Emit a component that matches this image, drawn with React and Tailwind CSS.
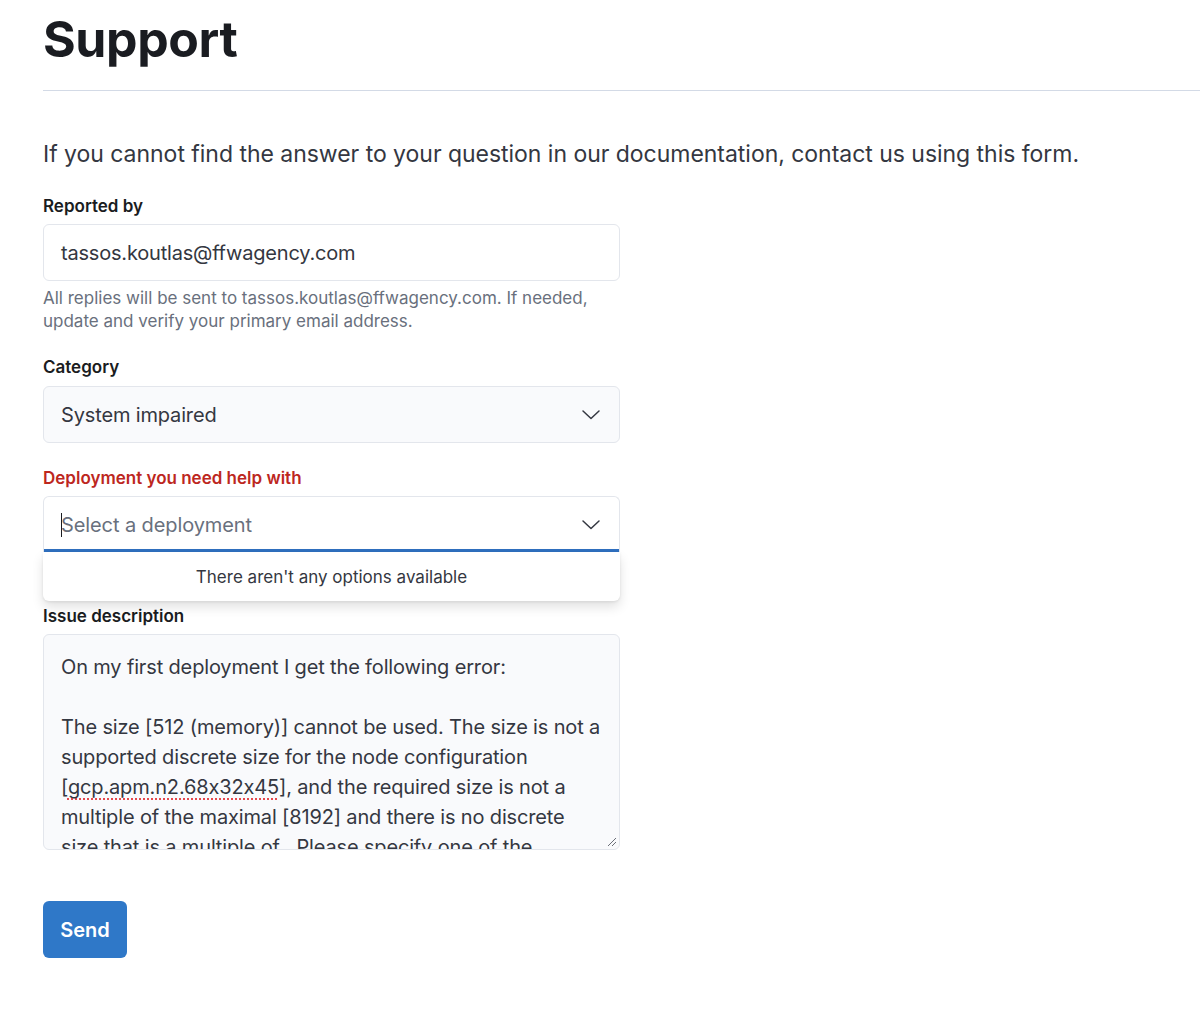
import React from "react";

function Chevron() {
  return (
    <svg width="20" height="20" viewBox="0 0 20 20" fill="none" stroke="#343741" strokeWidth="1.5" strokeLinecap="round" strokeLinejoin="round">
      <path d="M2 6 L10 13.5 L18 6" />
    </svg>
  );
}

export default function App() {
  return (
    <div className="min-h-[1012px] bg-white text-[#1a1c21] font-[Inter,'Noto_Sans',sans-serif] [font-feature-settings:'calt'_0]">
      <div className="pl-[43px] pt-[8px]">
        <h1 className="text-[50px] leading-[62px] font-bold tracking-[-0.4px] text-[#1a1c21]">Support</h1>
      </div>
      <div className="ml-[43px] mt-[20px] h-px bg-[#d3dae6]" />
      <div className="pl-[43px] pt-[48px]">
        <p className="text-[23px] leading-[30px] tracking-[-0.03px] text-[#343741]">
          If you cannot find the answer to your question in our documentation, contact us using this form.
        </p>

        <div className="w-[577px]">
          <div className="mt-[25px] text-[17px] leading-[24px] font-semibold text-[#1a1c21]">Reported by</div>
          <div className="mt-[6px] h-[57px] rounded-[6px] border border-[#e3e6ec] bg-white px-[17px] flex items-center text-[20px] tracking-[-0.2px] text-[#343741]">
            tassos.koutlas@ffwagency.com
          </div>
          <div className="mt-[6px] text-[17px] leading-[23px] text-[#69707d]">
            All replies will be sent to tassos.koutlas@ffwagency.com. If needed, update and verify your primary email address.
          </div>

          <div className="mt-[22px] text-[17px] leading-[24px] font-semibold text-[#1a1c21]">Category</div>
          <div className="mt-[7px] h-[57px] rounded-[6px] border border-[#e3e6ec] bg-[#f9fafc] pl-[17px] pr-[18px] flex items-center justify-between text-[20px] tracking-[-0.15px] text-[#343741]">
            <span>System impaired</span>
            <Chevron />
          </div>

          <div className="mt-[23px] text-[17px] leading-[24px] font-semibold text-[#bd271e]">Deployment you need help with</div>
          <div className="relative mt-[6px]">
            <div className="h-[56px] rounded-t-[6px] border border-b-0 border-[#e3e6ec] bg-white pl-[17px] pr-[18px] flex items-center justify-between text-[20px] tracking-[-0.1px] text-[#69707d] shadow-[inset_0_-3px_0_#2f6fbf]">
              <span className="flex items-center">
                <span className="inline-block w-px h-[24px] bg-[#1a1c21] mr-[-1px]" />
                <span>Select a deployment</span>
              </span>
              <Chevron />
            </div>
            <div className="absolute left-0 right-0 top-[56px] z-10 h-[49px] pt-[3px] rounded-b-[6px] bg-white flex items-center justify-center text-[17px] text-[#343741] shadow-[0_6px_12px_rgba(0,0,0,0.12),0_1px_3px_rgba(0,0,0,0.08)]">
              There aren't any options available
            </div>
          </div>

          <div className="mt-[52px] text-[17px] leading-[24px] font-semibold text-[#1a1c21]">Issue description</div>
          <div className="relative mt-[6px] h-[216px] overflow-hidden rounded-[6px] border border-[#e3e6ec] bg-[#f9fafc] pl-[17px] pr-[12px] pt-[17px] text-[20px] leading-[30px] tracking-[-0.15px] text-[#343741]">
            <p>On my first deployment I get the following error:</p>
            <p>&nbsp;</p>
            <p>
              The size [512 (memory)] cannot be used. The size is not a supported discrete size for the node configuration [<span className="underline decoration-dotted decoration-[#e5484d] decoration-2 underline-offset-[4px]">gcp.apm.n2.68x32x45</span>], and the required size is not a multiple of the maximal [8192] and there is no discrete size that is a multiple of . Please specify one of the
            </p>
            <svg className="absolute right-[2px] bottom-[2px]" width="12" height="12" viewBox="0 0 12 12" stroke="#6b6f78" strokeWidth="1">
              <path d="M11 3 L3 11 M11 7 L7 11" />
            </svg>
          </div>

          <button className="mt-[51px] h-[57px] w-[84px] rounded-[6px] bg-[#2f78c8] text-white text-[20px] font-semibold">
            Send
          </button>
        </div>
      </div>
    </div>
  );
}
